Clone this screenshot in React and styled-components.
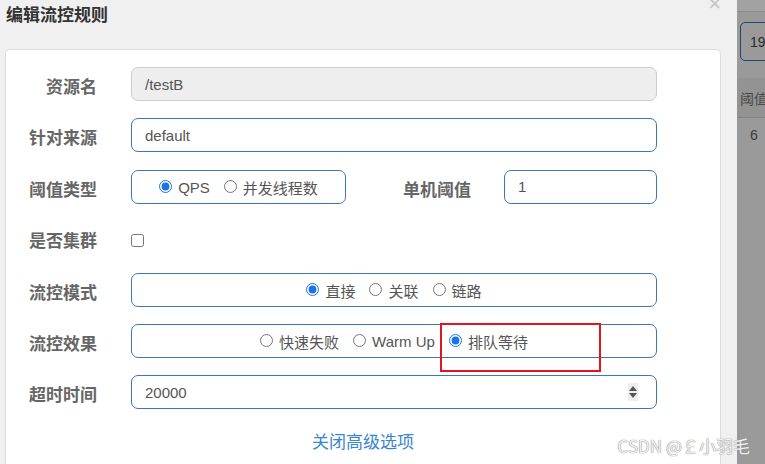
import React from 'react'
import styled, { createGlobalStyle } from 'styled-components'

const GlobalStyle = createGlobalStyle`
  html, body {
    margin: 0;
    padding: 0;
    width: 765px;
    height: 464px;
    overflow: hidden;
    background: #f0f0f0;
    font-family: "Liberation Sans", Arial, "Noto Sans CJK SC", sans-serif;
  }
`

const Page = styled.div`
  position: relative;
  display: flex;
  width: 765px;
  height: 464px;
  overflow: hidden;
`

const Dialog = styled.div`
  position: relative;
  width: 737px;
  flex-shrink: 0;
  background: #f0f0f0;
  display: flex;
  flex-direction: column;
`

const Header = styled.div`
  display: flex;
  align-items: flex-start;
  justify-content: space-between;
  height: 49px;
  padding: 0 6px;
  box-sizing: border-box;
`

const Title = styled.h4`
  margin: 4px 0 0 0;
  font-size: 17px;
  font-weight: bold;
  color: #333;
  line-height: 20px;
  font-family: "Noto Sans CJK SC", sans-serif;
`

const Close = styled.span`
  margin: -6px 10px 0 0;
  font-size: 22px;
  line-height: 20px;
  color: #c4c4c4;
  font-family: "Liberation Sans", Arial, sans-serif;
`

const Card = styled.div`
  margin-left: 5px;
  width: 716px;
  flex: 1;
  background: #fff;
  border: 1px solid #ddd;
  border-bottom: none;
  border-radius: 5px 5px 0 0;
  box-sizing: border-box;
  padding: 17px 63px 0 0;
`

const Form = styled.div`
  display: grid;
  grid-template-columns: 91px 1fr;
  column-gap: 34px;
  row-gap: 17.4px;
`

const Label = styled.div`
  height: 34px;
  box-sizing: border-box;
  padding-top: 9px;
  text-align: right;
  font-size: 17px;
  line-height: 20px;
  font-weight: bold;
  color: #666;
  font-family: "Noto Sans CJK SC", sans-serif;
  white-space: nowrap;
`

const TextInput = styled.div`
  height: 34px;
  box-sizing: border-box;
  border: 1px solid ${({ disabled }) => (disabled ? '#ccc' : '#3a78b6')};
  background: ${({ disabled }) => (disabled ? '#eee' : '#fff')};
  border-radius: 7px;
  padding: 0 13px;
  display: flex;
  align-items: center;
  font-size: 15px;
  color: #555;
  width: ${({ w }) => (w ? `${w}px` : 'auto')};
  flex-shrink: 0;
`

const InputText = styled.span`
  flex: 1;
`

const Spinner = styled.span`
  width: 10px;
  height: 18px;
  background: #eee;
  display: flex;
  flex-direction: column;
  align-items: center;
  justify-content: center;
  gap: 2px;
  margin-right: 5px;
`

const Tri = styled.span`
  width: 0;
  height: 0;
  border-left: 4px solid transparent;
  border-right: 4px solid transparent;
  ${({ up }) => (up ? 'border-bottom: 5px solid #555;' : 'border-top: 5px solid #555;')}
`

const Split = styled.div`
  display: flex;
  align-items: flex-start;
`

const SubLabel = styled(Label)`
  flex: 1;
  margin-right: 33px;
`

const RadioBox = styled.div`
  position: relative;
  height: 34px;
  box-sizing: border-box;
  border: 1px solid #3a78b6;
  border-radius: 7px;
  display: flex;
  align-items: center;
  justify-content: center;
  gap: 14px;
  width: ${({ w }) => (w ? `${w}px` : 'auto')};
  flex-shrink: 0;
`

const RadioItem = styled.label`
  display: flex;
  align-items: center;
  gap: 6px;
  font-size: 15px;
  color: #555;
  font-family: "Liberation Sans", Arial, "Noto Sans CJK SC", sans-serif;
  white-space: nowrap;
  padding-top: 2px;

  input {
    margin: 0;
    width: 13px;
    height: 13px;
    accent-color: #1a73e8;
    position: relative;
    top: -1px;
  }
`

const CheckRow = styled.div`
  height: 34px;
  display: flex;
  align-items: center;
  padding-top: 4px;
  box-sizing: border-box;

  input {
    margin: 0;
    width: 13px;
    height: 13px;
  }
`

const Highlight = styled.div`
  position: absolute;
  left: 308px;
  top: -2px;
  width: 161px;
  height: 49px;
  border: 2px solid #e4141c;
  box-sizing: border-box;
  pointer-events: none;
`

const Toggle = styled.div`
  text-align: center;
  margin-top: 19px;
  padding-left: 63px;
  font-size: 17px;
  color: #3a86cf;
  font-family: "Noto Sans CJK SC", sans-serif;
`

const Backdrop = styled.div`
  flex: 1;
  background: #9a9a9a;
  display: flex;
  flex-direction: column;
  overflow: hidden;
`

const TopBand = styled.div`
  height: 11px;
  background: #a2a2a2;
  border-bottom: 1px solid #8c8c8c;
`

const SearchBox = styled.div`
  margin: 10px 0 0 3px;
  height: 39px;
  width: 60px;
  box-sizing: border-box;
  border: 1px solid #24466e;
  border-radius: 5px;
  padding-left: 9px;
  display: flex;
  align-items: center;
  font-size: 14px;
  color: #2a2a2a;
`

const TableHead = styled.div`
  margin-top: 17px;
  height: 39px;
  background: #939393;
  border-bottom: 1px solid #828282;
  display: flex;
  align-items: center;
  padding-left: 3px;
  font-size: 14px;
  color: #4a4a4a;
  white-space: nowrap;
  font-family: "Noto Sans CJK SC", sans-serif;
`

const TableCell = styled.div`
  padding: 9px 0 0 13px;
  font-size: 14px;
  color: #3a3a3a;
`

const Watermark = styled.div`
  position: absolute;
  right: 15px;
  bottom: 6px;
  font-size: 17px;
  color: rgba(255, 255, 255, 0.9);
  text-shadow: 0 0 1px #888, 0 0 1px #888;
  font-family: "Noto Sans CJK SC", sans-serif;
  white-space: nowrap;
`

const Radio = ({ name, label, checked }) => (
  <RadioItem>
    <input type="radio" name={name} defaultChecked={checked} />
    {label}
  </RadioItem>
)

export default function App() {
  return (
    <Page>
      <GlobalStyle />
      <Dialog>
        <Header>
          <Title>编辑流控规则</Title>
          <Close>×</Close>
        </Header>
        <Card>
          <Form>
            <Label>资源名</Label>
            <TextInput disabled>/testB</TextInput>

            <Label>针对来源</Label>
            <TextInput>default</TextInput>

            <Label>阈值类型</Label>
            <Split>
              <RadioBox w={215}>
                <Radio name="grade" label="QPS" checked />
                <Radio name="grade" label="并发线程数" />
              </RadioBox>
              <SubLabel>单机阈值</SubLabel>
              <TextInput w={153}>1</TextInput>
            </Split>

            <Label>是否集群</Label>
            <CheckRow>
              <input type="checkbox" />
            </CheckRow>

            <Label>流控模式</Label>
            <RadioBox>
              <Radio name="strategy" label="直接" checked />
              <Radio name="strategy" label="关联" />
              <Radio name="strategy" label="链路" />
            </RadioBox>

            <Label>流控效果</Label>
            <RadioBox>
              <Radio name="behavior" label="快速失败" />
              <Radio name="behavior" label="Warm Up" />
              <Radio name="behavior" label="排队等待" checked />
              <Highlight />
            </RadioBox>

            <Label>超时时间</Label>
            <TextInput>
              <InputText>20000</InputText>
              <Spinner>
                <Tri up />
                <Tri />
              </Spinner>
            </TextInput>
          </Form>
          <Toggle>关闭高级选项</Toggle>
        </Card>
      </Dialog>
      <Backdrop>
        <TopBand />
        <SearchBox>19</SearchBox>
        <TableHead>阈值</TableHead>
        <TableCell>6</TableCell>
      </Backdrop>
      <Watermark>CSDN @￡小羽毛</Watermark>
    </Page>
  )
}
